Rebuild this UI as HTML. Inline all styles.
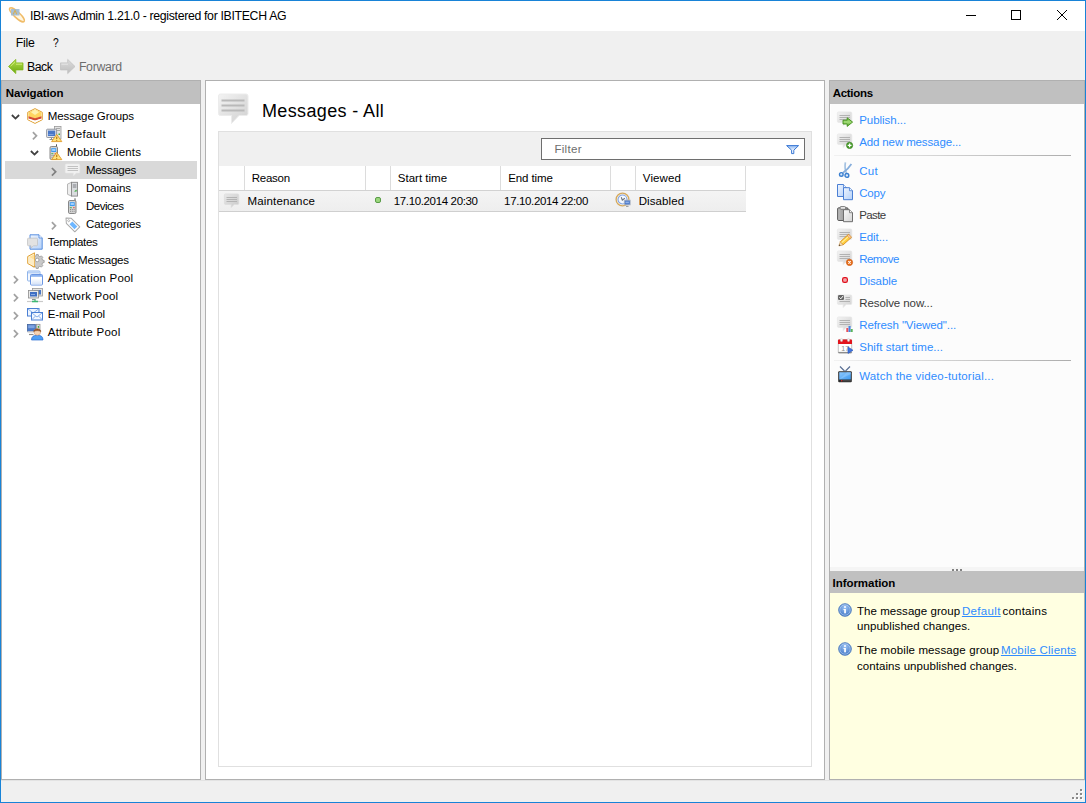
<!DOCTYPE html>
<html><head><meta charset="utf-8"><title>IBI-aws Admin</title>
<style>
*{box-sizing:border-box;margin:0;padding:0}
html,body{width:1086px;height:803px;overflow:hidden;background:#f0f0f0}
body{font-family:"Liberation Sans",sans-serif;font-size:12px;color:#000;position:relative}
.a{position:absolute}
.t{position:absolute;white-space:pre}
svg{position:absolute;overflow:visible}
.panel{position:absolute;background:#fff;border:1px solid #b0b0b0}
.phead{position:absolute;left:0;top:0;right:0;height:23px;background:#c0c0c0}
.vs{position:absolute;width:1px;background:#dcdcdc;top:166px;height:24px}
</style></head><body>
<svg width="0" height="0" style="position:absolute">
 <defs>
  <linearGradient id="gBub" x1="0" y1="0" x2="1" y2="1"><stop offset="0" stop-color="#f3f3f3"/><stop offset="1" stop-color="#d0d0d0"/></linearGradient>
  <linearGradient id="gGreen" x1="0" y1="0" x2="0" y2="1"><stop offset="0" stop-color="#b8e04a"/><stop offset="1" stop-color="#6aa812"/></linearGradient>
  <linearGradient id="gGray" x1="0" y1="0" x2="0" y2="1"><stop offset="0" stop-color="#dcdcdc"/><stop offset="1" stop-color="#bdbdbd"/></linearGradient>
  <linearGradient id="gBlue" x1="0" y1="0" x2="0" y2="1"><stop offset="0" stop-color="#8fc4ff"/><stop offset="1" stop-color="#4a94e8"/></linearGradient>
  <radialGradient id="gInfo" cx=".5" cy=".3" r=".7"><stop offset="0" stop-color="#9cc4f4"/><stop offset="1" stop-color="#3f74c4"/></radialGradient>
  <linearGradient id="gGreenH" x1="0" y1="0" x2="0" y2="1"><stop offset="0" stop-color="#6cbf3a"/><stop offset=".5" stop-color="#a4dc7a"/><stop offset="1" stop-color="#4f9f22"/></linearGradient>
  <linearGradient id="gWin" x1="0" y1="0" x2="0" y2="1"><stop offset="0" stop-color="#fff"/><stop offset="1" stop-color="#d4e2f8"/></linearGradient>
  <linearGradient id="gPgB" x1="0" y1="0" x2="1" y2="1"><stop offset="0" stop-color="#eef5ff"/><stop offset="1" stop-color="#b4d0f8"/></linearGradient>
  <linearGradient id="gPgG" x1="0" y1="0" x2="1" y2="1"><stop offset="0" stop-color="#fafafa"/><stop offset="1" stop-color="#d4d4d4"/></linearGradient>
  <linearGradient id="gClip" x1="0" y1="0" x2="1" y2="0"><stop offset="0" stop-color="#bcbcbc"/><stop offset="1" stop-color="#8c8c8c"/></linearGradient>
  <linearGradient id="gTv" x1="0" y1="0" x2="1" y2="1"><stop offset="0" stop-color="#8cc8ff"/><stop offset="1" stop-color="#3f9af0"/></linearGradient>
  <linearGradient id="gBubD" x1="0" y1="0" x2="1" y2="1"><stop offset="0" stop-color="#e8e8e8"/><stop offset="1" stop-color="#c8c8c8"/></linearGradient>
  <g id="bub16">
   <path d="M1.5 1.5h12a1 1 0 0 1 1 1v7a1 1 0 0 1-1 1h-4.5l-3 3v-3h-4.5a1 1 0 0 1-1-1v-7a1 1 0 0 1 1-1z" fill="url(#gBub)" stroke="#e2e2e2" stroke-width=".6"/>
   <path d="M3 4h9.5M3 6h9.5M3 8h9.5" stroke="#b4b4b4" stroke-width="1"/>
  </g>
  <g id="warn">
   <path d="M5.5 0.8L10.6 9.5H0.4z" fill="#ffd54a" stroke="#e09a1a" stroke-width=".9" stroke-linejoin="round"/>
   <path d="M5.5 3.6v3" stroke="#fff" stroke-width="1.3"/><circle cx="5.5" cy="8" r=".7" fill="#fff"/>
  </g>
  <g id="chevR"><path d="M.9 1.200L4.500 4.800L.9 8.400" fill="none" stroke="#a2a2a2" stroke-width="1.700"/></g>
  <g id="chevD"><path d="M.9 1L4.500 4.600L8.100 1" fill="none" stroke="#404040" stroke-width="1.800"/></g>
 </defs>
</svg>

<!-- window frame -->
<div class="a" style="left:0;top:0;width:1086px;height:803px;border:1px solid #1883d7;background:#f0f0f0"></div>
<div class="a" style="left:1px;top:1px;width:1084px;height:30px;background:#fff"></div>
<!-- title icon -->
<svg style="left:8px;top:6px" width="18" height="18" viewBox="0 0 18 18">
 <ellipse cx="9" cy="8.800" rx="9.800" ry="2.900" transform="rotate(43 9 8.800)" fill="#fff6e2" stroke="#f0bc68" stroke-width="1.500"/>
 <rect x="3" y="3" width="8.500" height="6.500" fill="#9fbbd6" fill-opacity=".9"/>
 <path d="M5.300 8.300L7 4.300L8.800 8.300" fill="none" stroke="#d4ae58" stroke-width="1.100"/>
</svg>
<!-- window controls -->
<div class="a" style="left:966px;top:15px;width:10px;height:1px;background:#000"></div>
<div class="a" style="left:1011px;top:10px;width:10px;height:10px;border:1px solid #000"></div>
<svg style="left:1057px;top:10px" width="10" height="10" viewBox="0 0 10 10"><path d="M0 0L10 10M10 0L0 10" stroke="#000" stroke-width="1"/></svg>

<!-- toolbar arrows -->
<svg style="left:8px;top:59px" width="16" height="15" viewBox="0 0 16 15">
 <path d="M.5 7.500L7.800 .4V3.900H15V10.900H7.800V14.600z" fill="url(#gGreen)" stroke="#82b81c" stroke-width=".8" stroke-linejoin="round"/>
 <path d="M2.600 7.200L6.900 3M8 5.200H14" fill="none" stroke="#e0f590" stroke-width="1" opacity=".75"/>
</svg>
<svg style="left:60px;top:59px" width="16" height="15" viewBox="0 0 16 15">
 <path d="M15 7.500L7.700 .4V3.900H.5V10.900H7.700V14.600z" fill="url(#gGray)" stroke="#c2c2c2" stroke-width=".8" stroke-linejoin="round"/>
 <path d="M1.500 5.200H8" fill="none" stroke="#ececec" stroke-width="1" opacity=".8"/>
</svg>

<!-- NAV PANEL -->
<div class="panel" style="left:1px;top:80px;width:200px;height:700px"><div class="phead"></div></div>
<div class="a" style="left:5px;top:161px;width:192px;height:18px;background:#d9d9d9"></div>
<!-- tree chevrons -->
<svg style="left:11px;top:113.8px" width="10" height="7"><use href="#chevD"/></svg>
<svg style="left:31.6px;top:130.5px" width="7" height="10"><use href="#chevR"/></svg>
<svg style="left:30px;top:149.8px" width="10" height="7"><use href="#chevD"/></svg>
<svg style="left:50.8px;top:166.5px" width="7" height="10"><path d="M.9 1L4.700 4.800L.9 8.600" fill="none" stroke="#808080" stroke-width="1.700"/></svg>
<svg style="left:50.8px;top:220.5px" width="7" height="10"><use href="#chevR"/></svg>
<svg style="left:12.8px;top:274.5px" width="7" height="10"><use href="#chevR"/></svg>
<svg style="left:12.8px;top:292.5px" width="7" height="10"><use href="#chevR"/></svg>
<svg style="left:12.8px;top:310.5px" width="7" height="10"><use href="#chevR"/></svg>
<svg style="left:12.8px;top:328.5px" width="7" height="10"><use href="#chevR"/></svg>
<!-- tree icons -->

<!-- CENTER PANEL -->
<div class="panel" style="left:205px;top:80px;width:620px;height:700px"></div>
<!-- big bubble -->
<svg style="left:218px;top:93px" width="32" height="32" viewBox="0 0 32 32">
 <path d="M2.5 1h25.5a2 2 0 0 1 2 2v17.5a2 2 0 0 1-2 2h-7l-7.5 8v-8h-11a2 2 0 0 1-2-2v-17.500a2 2 0 0 1 2-2z" fill="url(#gBub)" stroke="#ececec" stroke-width="1"/>
 <path d="M3.5 7.500h23M3.500 12.500h23M3.500 17.500h23" stroke="#b9b9b9" stroke-width="2"/>
</svg>
<!-- grid -->
<div class="a" style="left:218px;top:131px;width:594px;height:636px;border:1px solid #e0e0e0;background:#fff"></div>
<div class="a" style="left:219px;top:132px;width:592px;height:34px;background:#f0f0f0"></div>
<div class="a" style="left:541px;top:138px;width:264px;height:22px;background:#fff;border:1px solid #6e6e6e"></div>
<svg style="left:786px;top:145px" width="14" height="10" viewBox="0 0 14 10"><defs><linearGradient id="gFun" x1="0" y1="0" x2="0" y2="1"><stop offset="0" stop-color="#8fb8f0"/><stop offset=".6" stop-color="#eef5ff"/></linearGradient></defs><path d="M.6 .6H12.600L7.800 5.200V8.600H5.600V5.200z" fill="url(#gFun)" stroke="#3a78d4" stroke-width="1" stroke-linejoin="round"/></svg>
<!-- header separators -->
<div class="vs" style="left:244px"></div><div class="vs" style="left:365px"></div><div class="vs" style="left:390px"></div>
<div class="vs" style="left:500px"></div><div class="vs" style="left:610px"></div><div class="vs" style="left:635px"></div><div class="vs" style="left:745px"></div>
<!-- row -->
<div class="a" style="left:219px;top:190px;width:527px;height:22px;background:linear-gradient(#f4f4f4,#eeeeee);border-top:1px solid #d2d2d2;border-bottom:1px solid #cfcfcf"></div>
<svg style="left:224px;top:192.800px" width="16" height="16" viewBox="0 0 16 16"><path d="M1.600 .9h12a1.200 1.200 0 0 1 1.200 1.200v8.200a1.200 1.200 0 0 1-1.200 1.200h-3.600l-2.800 3v-3h-5.600a1.200 1.200 0 0 1-1.200-1.200v-8.200a1.200 1.200 0 0 1 1.200-1.200z" fill="url(#gBubD)" stroke="#dcdcdc" stroke-width=".7"/><path d="M2.500 4.500h10.500M2.500 6.500h10.500M2.500 8.500h10.500" stroke="#b4b4b4" stroke-width="1"/></svg>
<div class="a" style="left:375px;top:197px;width:6px;height:6px;border-radius:2px;background:#9ad67c;border:1px solid #5a9c48"></div>
<!-- clock icon -->
<svg style="left:615.100px;top:192.200px" width="16" height="16" viewBox="0 0 16 16">
 <circle cx="7.500" cy="7.500" r="6.400" fill="#fcf4e2" stroke="#d4a85c" stroke-width="1.300"/>
 <circle cx="7.500" cy="7.500" r="4.500" fill="#f4f9ff" stroke="#7fa2e4" stroke-width="1.100"/>
 <path d="M6.300 5.300L7.300 8.200L9.800 6.300" fill="none" stroke="#6a7078" stroke-width="1.100"/>
 <rect x="9.200" y="8.100" width="6" height="4.800" fill="#4a78c8" stroke="#b8bcc4" stroke-width=".8"/>
 <rect x="10.500" y="9.600" width="3.400" height="1.600" fill="#8fb0e8"/>
 <path d="M11 14.300h2.500" stroke="#8c8c8c" stroke-width="1"/>
</svg>

<!-- RIGHT PANEL -->
<div class="panel" style="left:829px;top:80px;width:256px;height:700px;background:#fcfcfc"><div class="phead"></div></div>
<div class="a" style="left:834px;top:155px;width:237px;height:1px;background:linear-gradient(to right,#f2f2f2,#cfcfcf 50%,#adadad)"></div>
<div class="a" style="left:834px;top:360px;width:237px;height:1px;background:linear-gradient(to right,#f2f2f2,#cfcfcf 50%,#adadad)"></div>
<div class="a" style="left:830px;top:104px;width:1px;height:463px;background:#fff"></div><div class="a" style="left:1083px;top:104px;width:1px;height:463px;background:#fff"></div>
<!-- splitter + info -->
<div class="a" style="left:830px;top:567px;width:254px;height:4px;background:#f5f5f5"></div>
<div class="a" style="left:952px;top:569px;width:2px;height:2px;background:#828282;box-shadow:4px 0 #828282,8px 0 #828282"></div>
<div class="a" style="left:830px;top:571px;width:254px;height:22px;background:#c0c0c0"></div>
<div class="a" style="left:830px;top:593px;width:254px;height:186px;background:#ffffe1"></div>
<svg style="left:838px;top:603px" width="14" height="14" viewBox="0 0 14 14"><circle cx="7" cy="7" r="6.300" fill="url(#gInfo)" stroke="#4a78bc" stroke-width=".9"/><circle cx="7" cy="7" r="5.200" fill="none" stroke="#c4dcf8" stroke-width=".7" opacity=".8"/><rect x="6.200" y="6" width="1.700" height="4.300" fill="#fff"/><rect x="5.500" y="6" width="1.500" height="1" fill="#fff"/><circle cx="7" cy="4" r="1" fill="#fff"/></svg>
<svg style="left:838px;top:642px" width="14" height="14" viewBox="0 0 14 14"><circle cx="7" cy="7" r="6.300" fill="url(#gInfo)" stroke="#4a78bc" stroke-width=".9"/><circle cx="7" cy="7" r="5.200" fill="none" stroke="#c4dcf8" stroke-width=".7" opacity=".8"/><rect x="6.200" y="6" width="1.700" height="4.300" fill="#fff"/><rect x="5.500" y="6" width="1.500" height="1" fill="#fff"/><circle cx="7" cy="4" r="1" fill="#fff"/></svg>

<div class="a" style="left:1px;top:780px;width:1084px;height:1px;background:#e3e3e3"></div>
<!-- status grip -->
<div class="a" style="left:1080px;top:789px;width:2px;height:2px;background:#8a8a8a;box-shadow:1px 1px #fff"></div>
<div class="a" style="left:1076px;top:793px;width:2px;height:2px;background:#8a8a8a;box-shadow:1px 1px #fff"></div>
<div class="a" style="left:1080px;top:793px;width:2px;height:2px;background:#8a8a8a;box-shadow:1px 1px #fff"></div>
<div class="a" style="left:1072px;top:797px;width:2px;height:2px;background:#8a8a8a;box-shadow:1px 1px #fff"></div>
<div class="a" style="left:1076px;top:797px;width:2px;height:2px;background:#8a8a8a;box-shadow:1px 1px #fff"></div>
<div class="a" style="left:1080px;top:797px;width:2px;height:2px;background:#8a8a8a;box-shadow:1px 1px #fff"></div>

<svg style="left:27px;top:108px" width="16" height="16" viewBox="0 0 16 16"><path d="M8 .6L15.300 4.300V11.700L8 15.400L.7 11.700V4.300z" fill="#fffaf0" stroke="#e0a236" stroke-width="1" stroke-linejoin="round"/><path d="M1.500 4.600L8 1.400L14.500 4.600V8.500L8 10.500L1.500 8.500z" fill="#ffd560"/><path d="M8 1.400L12 4.300L8 7L4 4.300z" fill="#fff2b0"/><path d="M1.500 8.300L8 10.300L14.500 8.300V10.500L8 12.500L1.500 10.500z" fill="#d44a32"/><path d="M1.500 10.700L8 12.700L14.500 10.700V11.500L8 14.600L1.500 11.500z" fill="#fff"/></svg>
<svg style="left:46px;top:126px" width="16" height="16" viewBox="0 0 16 16"><rect x="8.500" y=".5" width="6.500" height="12.500" fill="#e4e4e4" stroke="#9a9a9a" stroke-width=".8"/><path d="M10 2.500h4M10 4.500h4" stroke="#9a9a9a" stroke-width=".8"/><rect x="12.500" y="7.500" width="1.500" height="1.500" fill="#3fae3f"/><rect x=".6" y="3.200" width="10" height="8.300" rx=".8" fill="#dfe3ea" stroke="#8a8f98" stroke-width=".9"/><rect x="2" y="4.600" width="7.200" height="5.400" fill="#4a78c8"/><path d="M2.500 8.500h5" stroke="#8fb0e8" stroke-width=".7"/><path d="M3.500 13.500h5M5.500 11.500v2" stroke="#8a8f98" stroke-width="1"/><g transform="translate(5.2,7.6)"><path d="M5.500 .8L10.600 8H.4z" fill="#ffe27a" stroke="#e09a28" stroke-width=".9" stroke-linejoin="round"/><path d="M5.500 3.200v2.300" stroke="#b87a1c" stroke-width="1.200"/><circle cx="5.500" cy="6.700" r=".65" fill="#b87a1c"/></g></svg>
<svg style="left:46px;top:144px" width="16" height="16" viewBox="0 0 16 16"><g transform="translate(1.500,0)"><path d="M9 .3v4" stroke="#555" stroke-width="1"/><rect x="2.500" y="2.500" width="7.500" height="13" rx="1.300" fill="#d4d4d4" stroke="#7d7d7d" stroke-width=".9"/><rect x="3.800" y="4.200" width="4.900" height="3.800" fill="#3c9cf4"/><rect x="4.600" y="5.200" width="3.300" height="1.600" fill="#b8dcff"/><rect x="3.800" y="9.200" width="2" height="1" fill="#4caf50"/><rect x="7.200" y="9.200" width="1.400" height="1" fill="#e53935"/><path d="M4 11.500h1M5.800 11.500h1M7.600 11.500h1M4 13.300h1M5.800 13.300h1M7.600 13.300h1" stroke="#8a8a8a" stroke-width="1"/></g><g transform="translate(5.2,7.6)"><path d="M5.500 .8L10.600 8H.4z" fill="#ffe27a" stroke="#e09a28" stroke-width=".9" stroke-linejoin="round"/><path d="M5.500 3.200v2.300" stroke="#b87a1c" stroke-width="1.200"/><circle cx="5.500" cy="6.700" r=".65" fill="#b87a1c"/></g></svg>
<svg style="left:64.5px;top:162.5px" width="16" height="15" viewBox="0 0 16 15"><path d="M1.400 .9h12.200a1.200 1.200 0 0 1 1.200 1.200v6.800a1.200 1.200 0 0 1-1.200 1.200h-2.400l-2.800 2.800v-2.800h-7a1.200 1.200 0 0 1-1.200-1.200v-6.800a1.200 1.200 0 0 1 1.200-1.200z" fill="#f1f1f1" stroke="#e6e6e6" stroke-width=".6"/><path d="M2.500 3.500h10.500M2.500 5.500h10.500M2.500 7.500h10.500" stroke="#c2c2c2" stroke-width="1"/></svg>
<svg style="left:66px;top:180.5px" width="16" height="16" viewBox="0 0 16 16"><g transform="translate(0,.5)"><path d="M1.500 2.600L5.500 .8V14.600L1.500 12.800z" fill="#eeeeee" stroke="#a6a6a6" stroke-width=".8" stroke-linejoin="round"/><rect x="5.500" y=".8" width="6" height="13.800" fill="#dadcdf" stroke="#888" stroke-width=".9"/><path d="M6.800 3.500h3.600M6.800 5.500h3.600" stroke="#7c7f84" stroke-width="1"/><path d="M8.600 9.800l1.800-1.400v1.400z" fill="#3fae3f" stroke="#3fae3f" stroke-width=".5"/></g></svg>
<svg style="left:66px;top:198px" width="16" height="16" viewBox="0 0 16 16"><path d="M9 .3v4" stroke="#555" stroke-width="1"/><rect x="2.500" y="2.500" width="7.500" height="13" rx="1.300" fill="#d4d4d4" stroke="#7d7d7d" stroke-width=".9"/><rect x="3.800" y="4.200" width="4.900" height="3.800" fill="#3c9cf4"/><rect x="4.600" y="5.200" width="3.300" height="1.600" fill="#b8dcff"/><rect x="3.800" y="9.200" width="2" height="1" fill="#4caf50"/><rect x="7.200" y="9.200" width="1.400" height="1" fill="#e53935"/><path d="M4 11.500h1M5.800 11.500h1M7.600 11.500h1M4 13.300h1M5.800 13.300h1M7.600 13.300h1" stroke="#8a8a8a" stroke-width="1"/></svg>
<svg style="left:64px;top:216px" width="16" height="16" viewBox="0 0 16 16"><g transform="rotate(45 8 8)"><path d="M-.5 8L3.500 4.500H15.500V11.500H3.500z" fill="#fff" stroke="#a9a9a9" stroke-width="1" stroke-linejoin="round"/><circle cx="3.300" cy="8" r="1" fill="#fff" stroke="#a9a9a9" stroke-width=".8"/><rect x="6.500" y="6" width="7" height="4" fill="#6db6ff"/></g></svg>
<svg style="left:27px;top:234px" width="16" height="16" viewBox="0 0 16 16"><path d="M3 .8H12L15.200 4V15.200H3z" fill="url(#gPgB)" stroke="#4a84dc" stroke-width=".9" stroke-linejoin="round"/><path d="M12 .8V4H15.200" fill="#f4f8ff" stroke="#4a84dc" stroke-width=".8"/><path d="M1.500 4.200h8a1 1 0 0 1 1 1v5.600a1 1 0 0 1-1 1h-3l-2.500 2.200v-2.200h-2.500a1 1 0 0 1-1-1v-5.600a1 1 0 0 1 1-1z" fill="#e2e2e2" stroke="#bebebe" stroke-width=".7"/></svg>
<svg style="left:27px;top:252px" width="16" height="16" viewBox="0 0 16 16"><g transform="translate(10.200,8)"><path d="M-1-5.500h2l.4 1.600 1.300.6 1.500-.8 1.400 1.400-.8 1.500.6 1.300 1.600.4v2l-1.600.4-.6 1.300.8 1.500-1.400 1.400-1.500-.8-1.300.6-.4 1.600h-2l-.4-1.600-1.300-.6-1.500.8-1.400-1.400.8-1.500-.6-1.300-1.600-.4v-2l1.600-.4.600-1.300-.8-1.500 1.400-1.400 1.500.8 1.300-.6z" fill="#c9c9c9" stroke="#8f8f8f" stroke-width=".7"/><circle r="1.800" fill="#fff" stroke="#8f8f8f" stroke-width=".7"/></g><path d="M7.500 .8L.7 4.500V11.500L7.500 15.200z" fill="#fff6e0" stroke="#e0a236" stroke-width="1" stroke-linejoin="round"/><path d="M7.300 2.200L2 5L7.300 8z" fill="#ffe09a"/><path d="M7.300 8L2 5V11L7.300 13.800z" fill="#fdecc4"/></svg>
<svg style="left:27px;top:270px" width="16" height="16" viewBox="0 0 16 16"><rect x=".5" y="1" width="12.500" height="10" rx="1" fill="#f4f8fe" stroke="#8fb4ea" stroke-width="1"/><rect x="1" y="1.500" width="11.500" height="2" fill="#b9d2f6"/><rect x="3.500" y="4.500" width="12" height="10.500" rx="1" fill="#fff" stroke="#5a8ae0" stroke-width=".9"/><rect x="4" y="5" width="11" height="1.800" fill="#8db4f0"/><rect x="4.500" y="8.500" width="10" height="6" fill="url(#gWin)"/></svg>
<svg style="left:27px;top:288px" width="16" height="16" viewBox="0 0 16 16"><rect x="5.500" y=".5" width="10" height="7.500" fill="#e6e6e6" stroke="#9a9a9a" stroke-width=".8"/><rect x="7" y="2" width="7" height="4.500" fill="#4a78c8"/><rect x="1.500" y="2.500" width="10" height="7.500" fill="#e9e9e9" stroke="#8d8d8d" stroke-width=".8"/><rect x="3" y="4" width="7" height="4.500" fill="#3f6fc4"/><path d="M4 6.500h4" stroke="#9fbcea" stroke-width=".8"/><path d="M5 11.500h3.500" stroke="#8d8d8d" stroke-width="1"/><path d="M0 13.500h16" stroke="#c9c9c9" stroke-width="1.200"/><path d="M5 13.500h6M8 11.500v2" stroke="#3fb872" stroke-width="1.300"/></svg>
<svg style="left:27px;top:306px" width="16" height="16" viewBox="0 0 16 16"><rect x=".5" y="2.500" width="11.500" height="7.500" fill="#eef5ff" stroke="#4a7fd4" stroke-width="1"/><path d="M1 3L6.200 7L11.500 3" fill="none" stroke="#7fa8e6" stroke-width=".9"/><rect x="4.500" y="6.500" width="11" height="7.500" fill="#f4f8ff" stroke="#4a7fd4" stroke-width="1"/><path d="M5 7L10 11L15 7M5 13.500L8.500 10M15 13.500L11.500 10" fill="none" stroke="#7fa8e6" stroke-width=".9"/></svg>
<svg style="left:27px;top:324px" width="16" height="16" viewBox="0 0 16 16"><rect x="9.500" y=".3" width="3.500" height="8" fill="#dcdcdc" stroke="#8c8c8c" stroke-width=".7"/><rect x="10.800" y="2" width="1.200" height="1.800" fill="#3fae3f"/><rect x=".3" y=".3" width="8.200" height="7" fill="#4a78c8" stroke="#38598f" stroke-width=".6"/><rect x="1.200" y="1.200" width="6.400" height="3" fill="#7fa4e0"/><rect x=".5" y="7.300" width="8" height="1.500" fill="#d8d8d8"/><path d="M2 10.500h4.500" stroke="#8d8d8d" stroke-width="1.200"/><path d="M4.500 16C4.500 12.500 6.500 11.300 10.300 11.300C14 11.300 16 12.500 16 16z" fill="#4f9ff4" stroke="#2c6fd0" stroke-width=".7"/><circle cx="10.300" cy="8" r="3.300" fill="#f6d4b4" stroke="#c8926a" stroke-width=".5"/><path d="M6.800 7.500C6.800 4 13.800 4 13.800 7.500C12.500 6.300 8 6.300 6.800 7.500z" fill="#8a4a1c" stroke="#8a4a1c" stroke-width=".6"/></svg>
<svg style="left:837px;top:111px" width="16" height="16" viewBox="0 0 16 16"><path d="M1.6 .9h12.000a1.200 1.200 0 0 1 1.200 1.200v8.200a1.200 1.200 0 0 1-1.200 1.200h-4.600l-2.800 3v-3h-4.600a1.200 1.200 0 0 1-1.200-1.200v-8.200a1.200 1.200 0 0 1 1.200-1.200z" fill="url(#gBub)" stroke="#e6e6e6" stroke-width=".7"/><path d="M2.500 4.500h10.500M2.500 6.500h10.500M2.500 8.500h10.500" stroke="#b2b2b2" stroke-width="1"/><path d="M6 9.200h4.200v-2.400l5.400 4.300-5.400 4.300v-2.400h-4.200z" fill="url(#gGreenH)" stroke="#3f8f1a" stroke-width=".9" stroke-linejoin="round"/></svg>
<svg style="left:837px;top:133px" width="16" height="16" viewBox="0 0 16 16"><path d="M1.6 .9h12.000a1.200 1.200 0 0 1 1.200 1.200v8.200a1.200 1.200 0 0 1-1.200 1.200h-4.600l-2.800 3v-3h-4.600a1.200 1.200 0 0 1-1.200-1.200v-8.200a1.200 1.200 0 0 1 1.200-1.200z" fill="url(#gBub)" stroke="#e6e6e6" stroke-width=".7"/><path d="M2.500 4.500h10.500M2.500 6.500h10.500M2.500 8.500h10.500" stroke="#b2b2b2" stroke-width="1"/><circle cx="12.600" cy="12.400" r="3.100" fill="#4aa02c" stroke="#3b7f22" stroke-width=".7"/><path d="M12.600 10.500v3.800M10.700 12.400h3.800" stroke="#fff" stroke-width="1.300"/></svg>
<svg style="left:837px;top:162px" width="16" height="16" viewBox="0 0 16 16"><path d="M8.400 .3C7.700 4 7.900 8 9.600 11.500" fill="none" stroke="#a4c2e2" stroke-width="1.700"/><path d="M14.400 2C12.500 5 9.500 8.300 5.800 11" fill="none" stroke="#86aedc" stroke-width="1.700"/><circle cx="4.300" cy="12.400" r="1.800" fill="#dcebfb" stroke="#3a7fd0" stroke-width="1.400"/><circle cx="9.900" cy="13.400" r="1.900" fill="#dcebfb" stroke="#3a7fd0" stroke-width="1.400"/></svg>
<svg style="left:837px;top:184px" width="16" height="16" viewBox="0 0 16 16"><g><path d="M.5 .5H6.500L9.500 3.500V12.500H.5z" fill="url(#gPgB)" stroke="#4a7fd4" stroke-width="1" stroke-linejoin="round"/><path d="M6.500 .5V3.500H9.500" fill="#f2f7ff" stroke="#4a7fd4" stroke-width=".8" stroke-linejoin="round"/></g><g transform="translate(6,3.200)"><path d="M.5 .5H6.500L9.500 3.500V12.500H.5z" fill="url(#gPgB)" stroke="#4a7fd4" stroke-width="1" stroke-linejoin="round"/><path d="M6.500 .5V3.500H9.500" fill="#f2f7ff" stroke="#4a7fd4" stroke-width=".8" stroke-linejoin="round"/></g></svg>
<svg style="left:837px;top:206px" width="16" height="16" viewBox="0 0 16 16"><rect x=".6" y="1.800" width="10.500" height="12.700" rx="1.200" fill="url(#gClip)" stroke="#5a5a5a" stroke-width="1"/><rect x="3.200" y=".5" width="5.300" height="2.800" rx=".8" fill="#e4e4e4" stroke="#6a6a6a" stroke-width=".8"/><g transform="translate(6,3.200)"><path d="M.5 .5H6.500L9.500 3.500V12.500H.5z" fill="url(#gPgG)" stroke="#6e6e6e" stroke-width="1" stroke-linejoin="round"/><path d="M6.500 .5V3.500H9.500" fill="#f6f6f6" stroke="#6e6e6e" stroke-width=".8" stroke-linejoin="round"/></g></svg>
<svg style="left:837px;top:228px" width="16" height="16" viewBox="0 0 16 16"><path d="M1.6 .9h12.000a1.200 1.200 0 0 1 1.200 1.200v8.200a1.200 1.200 0 0 1-1.200 1.200h-4.600l-2.800 3v-3h-4.600a1.200 1.200 0 0 1-1.200-1.200v-8.200a1.200 1.200 0 0 1 1.200-1.200z" fill="url(#gBub)" stroke="#e6e6e6" stroke-width=".7"/><path d="M2.500 4.500h10.500M2.500 6.500h10.500M2.500 8.500h10.500" stroke="#b2b2b2" stroke-width="1"/><g transform="rotate(-42 9.500 11)"><rect x="3" y="8.900" width="11" height="4.200" fill="#ffcf40" stroke="#d88a1a" stroke-width=".8"/><path d="M3 8.900L-.8 11L3 13.100z" fill="#f6dfb8" stroke="#c8924a" stroke-width=".6"/><path d="M.6 10.200L-.8 11L.6 11.800z" fill="#4a3a2a"/><rect x="12.200" y="8.900" width="2.200" height="4.200" rx=".8" fill="#f8c8a8" stroke="#d88a1a" stroke-width=".6"/><path d="M3.500 10.500h8.500" stroke="#fff0a0" stroke-width="1.100"/></g></svg>
<svg style="left:837px;top:250px" width="16" height="16" viewBox="0 0 16 16"><path d="M1.6 .9h12.000a1.200 1.200 0 0 1 1.200 1.200v8.200a1.200 1.200 0 0 1-1.200 1.200h-4.600l-2.800 3v-3h-4.600a1.200 1.200 0 0 1-1.200-1.200v-8.200a1.200 1.200 0 0 1 1.200-1.200z" fill="url(#gBub)" stroke="#e6e6e6" stroke-width=".7"/><path d="M2.500 4.500h10.500M2.500 6.500h10.500M2.500 8.500h10.500" stroke="#b2b2b2" stroke-width="1"/><circle cx="12.500" cy="12.400" r="3.100" fill="#e8701c" stroke="#cc5a14" stroke-width=".7"/><path d="M11.300 11.200l2.400 2.400M13.700 11.200l-2.400 2.400" stroke="#fff" stroke-width="1.100"/></svg>
<svg style="left:837px;top:272px" width="16" height="16" viewBox="0 0 16 16"><rect x="5.600" y="5.600" width="4.800" height="4.800" rx="1.700" fill="#f2a4aa" stroke="#e0101c" stroke-width="1.200"/></svg>
<svg style="left:837px;top:294px" width="16" height="16" viewBox="0 0 16 16"><path d="M1.600 .9h12.000a1.200 1.200 0 0 1 1.200 1.200v7.200a1.200 1.200 0 0 1-1.200 1.200h-4.600l-2.800 3v-3h-4.600a1.200 1.200 0 0 1-1.200-1.200v-7.200a1.200 1.200 0 0 1 1.200-1.200z" fill="url(#gBub)" stroke="#e6e6e6" stroke-width=".7"/><path d="M8.500 3.500h4.500M8.500 5.500h4.500M2.500 7.500h10.500" stroke="#b2b2b2" stroke-width="1"/><rect x="1" y="1" width="6" height="5" rx="1.300" fill="#666"/><path d="M2.400 3.400l1.400 1.400 2.200-2.700" fill="none" stroke="#fff" stroke-width="1"/></svg>
<svg style="left:837px;top:316px" width="16" height="16" viewBox="0 0 16 16"><path d="M1.6 .9h12.000a1.200 1.200 0 0 1 1.200 1.200v8.200a1.200 1.200 0 0 1-1.200 1.200h-4.600l-2.800 3v-3h-4.600a1.200 1.200 0 0 1-1.200-1.200v-8.200a1.200 1.200 0 0 1 1.200-1.200z" fill="url(#gBub)" stroke="#e6e6e6" stroke-width=".7"/><path d="M2.500 4.500h10.500M2.500 6.500h10.500M2.500 8.500h10.500" stroke="#b2b2b2" stroke-width="1"/><rect x="9.300" y="12" width="2.100" height="4" fill="#e8505a"/><rect x="11.500" y="10" width="2.100" height="6" fill="#4a86e4"/><rect x="13.700" y="13" width="2" height="3" fill="#5ab45a"/></svg>
<svg style="left:837px;top:338px" width="16" height="16" viewBox="0 0 16 16"><rect x="1.300" y="1.500" width="13.400" height="13.700" rx="1" fill="#fff" stroke="#b4b4b4" stroke-width=".8"/><path d="M1.300 14.500h13.400" stroke="#8c8c8c" stroke-width="1.200"/><path d="M1 2.500a1 1 0 0 1 1-1h12a1 1 0 0 1 1 1V6H1z" fill="#e2141c"/><rect x="3.500" y=".5" width="2" height="3" rx=".8" fill="#f4f4f4" stroke="#c9c9c9" stroke-width=".5"/><rect x="10.500" y=".5" width="2" height="3" rx=".8" fill="#f4f4f4" stroke="#c9c9c9" stroke-width=".5"/><text x="4.300" y="12.800" font-family="Liberation Sans,sans-serif" font-size="7" fill="#8a8a8a">17</text><path d="M11 9l5 3.200-5 3.200z" fill="#3f74e0" stroke="#2a55b8" stroke-width=".6" stroke-linejoin="round"/></svg>
<svg style="left:837px;top:365px" width="16" height="18" viewBox="0 0 16 18"><path d="M3 1.500L7.500 6M13 1.500L8.500 6" stroke="#5a6f94" stroke-width="1.200"/><rect x="1.200" y="6.200" width="13.600" height="11" rx="1" fill="#2b2b2b"/><rect x="2.200" y="7.200" width="11.600" height="7.300" fill="url(#gTv)"/><path d="M2.200 14.500L10 7.200H13.800V9z" fill="#9fd0ff" opacity=".45"/><rect x="4" y="15.300" width="1.400" height="1" fill="#ff3030"/><path d="M6.500 15.800h7" stroke="#777" stroke-width="1" stroke-dasharray="1 1"/></svg>
<span class="t" style="left:29.9px;top:7.7px;font-size:12.3px;line-height:16px;letter-spacing:-0.326px;color:#000;font-weight:400;">IBI-aws Admin 1.21.0 - registered for IBITECH AG</span>
<span class="t" style="left:15.8px;top:34.7px;font-size:12.3px;line-height:16px;letter-spacing:-0.276px;color:#000;font-weight:400;">File</span>
<span class="t" style="left:52.5px;top:34.7px;font-size:12.3px;line-height:16px;letter-spacing:0.000px;color:#000;font-weight:400;display:inline-block;transform-origin:0 0;transform:scaleX(0.833);">?</span>
<span class="t" style="left:26.9px;top:58.7px;font-size:12.3px;line-height:16px;letter-spacing:-0.448px;color:#000;font-weight:400;">Back</span>
<span class="t" style="left:78.9px;top:58.7px;font-size:12.3px;line-height:16px;letter-spacing:-0.302px;color:#6d6d6d;font-weight:400;">Forward</span>
<span class="t" style="left:5.7px;top:85.5px;font-size:11.5px;line-height:15px;letter-spacing:-0.100px;color:#000;font-weight:700;">Navigation</span>
<span class="t" style="left:832.7px;top:85.5px;font-size:11.5px;line-height:15px;letter-spacing:-0.295px;color:#000;font-weight:700;">Actions</span>
<span class="t" style="left:832.6px;top:575.5px;font-size:11.5px;line-height:15px;letter-spacing:-0.055px;color:#000;font-weight:700;">Information</span>
<span class="t" style="left:47.7px;top:108.5px;font-size:11.5px;line-height:15px;letter-spacing:-0.091px;color:#000;font-weight:400;">Message Groups</span>
<span class="t" style="left:67.0px;top:126.5px;font-size:11.5px;line-height:15px;letter-spacing:0.360px;color:#000;font-weight:400;">Default</span>
<span class="t" style="left:67.0px;top:144.5px;font-size:11.5px;line-height:15px;letter-spacing:0.128px;color:#000;font-weight:400;">Mobile Clients</span>
<span class="t" style="left:86.0px;top:162.5px;font-size:11.5px;line-height:15px;letter-spacing:-0.303px;color:#000;font-weight:400;">Messages</span>
<span class="t" style="left:86.0px;top:180.5px;font-size:11.5px;line-height:15px;letter-spacing:-0.065px;color:#000;font-weight:400;">Domains</span>
<span class="t" style="left:86.0px;top:198.5px;font-size:11.5px;line-height:15px;letter-spacing:-0.484px;color:#000;font-weight:400;">Devices</span>
<span class="t" style="left:86.0px;top:216.5px;font-size:11.5px;line-height:15px;letter-spacing:-0.058px;color:#000;font-weight:400;">Categories</span>
<span class="t" style="left:47.7px;top:234.5px;font-size:11.5px;line-height:15px;letter-spacing:-0.290px;color:#000;font-weight:400;">Templates</span>
<span class="t" style="left:47.7px;top:252.5px;font-size:11.5px;line-height:15px;letter-spacing:-0.220px;color:#000;font-weight:400;">Static Messages</span>
<span class="t" style="left:47.7px;top:270.5px;font-size:11.5px;line-height:15px;letter-spacing:0.201px;color:#000;font-weight:400;">Application Pool</span>
<span class="t" style="left:47.7px;top:288.5px;font-size:11.5px;line-height:15px;letter-spacing:0.183px;color:#000;font-weight:400;">Network Pool</span>
<span class="t" style="left:47.7px;top:306.5px;font-size:11.5px;line-height:15px;letter-spacing:-0.131px;color:#000;font-weight:400;">E-mail Pool</span>
<span class="t" style="left:47.7px;top:324.5px;font-size:11.5px;line-height:15px;letter-spacing:0.273px;color:#000;font-weight:400;">Attribute Pool</span>
<span class="t" style="left:859.2px;top:112.5px;font-size:11.5px;line-height:15px;letter-spacing:-0.035px;color:#2f8cff;font-weight:400;">Publish...</span>
<span class="t" style="left:859.2px;top:134.5px;font-size:11.5px;line-height:15px;letter-spacing:-0.124px;color:#2f8cff;font-weight:400;">Add new message...</span>
<span class="t" style="left:859.2px;top:163.5px;font-size:11.5px;line-height:15px;letter-spacing:0.247px;color:#2f8cff;font-weight:400;">Cut</span>
<span class="t" style="left:859.2px;top:185.5px;font-size:11.5px;line-height:15px;letter-spacing:-0.153px;color:#2f8cff;font-weight:400;">Copy</span>
<span class="t" style="left:859.2px;top:207.5px;font-size:11.5px;line-height:15px;letter-spacing:-0.605px;color:#3a3a3a;font-weight:400;">Paste</span>
<span class="t" style="left:859.2px;top:229.5px;font-size:11.5px;line-height:15px;letter-spacing:-0.068px;color:#2f8cff;font-weight:400;">Edit...</span>
<span class="t" style="left:859.2px;top:251.5px;font-size:11.5px;line-height:15px;letter-spacing:-0.546px;color:#2f8cff;font-weight:400;">Remove</span>
<span class="t" style="left:859.2px;top:273.5px;font-size:11.5px;line-height:15px;letter-spacing:-0.060px;color:#2f8cff;font-weight:400;">Disable</span>
<span class="t" style="left:859.2px;top:295.5px;font-size:11.5px;line-height:15px;letter-spacing:-0.084px;color:#3a3a3a;font-weight:400;">Resolve now...</span>
<span class="t" style="left:859.2px;top:317.5px;font-size:11.5px;line-height:15px;letter-spacing:-0.096px;color:#2f8cff;font-weight:400;">Refresh &quot;Viewed&quot;...</span>
<span class="t" style="left:859.2px;top:339.5px;font-size:11.5px;line-height:15px;letter-spacing:0.040px;color:#2f8cff;font-weight:400;">Shift start time...</span>
<span class="t" style="left:859.2px;top:368.5px;font-size:11.5px;line-height:15px;letter-spacing:0.182px;color:#2f8cff;font-weight:400;">Watch the video-tutorial...</span>
<span class="t" style="left:261.9px;top:99.8px;font-size:18px;line-height:23px;letter-spacing:0.373px;color:#000;font-weight:400;">Messages - All</span>
<span class="t" style="left:554.4px;top:141.5px;font-size:11.5px;line-height:15px;letter-spacing:0.327px;color:#6d6d6d;font-weight:400;">Filter</span>
<span class="t" style="left:251.7px;top:170.5px;font-size:11.5px;line-height:15px;letter-spacing:-0.228px;color:#000;font-weight:400;">Reason</span>
<span class="t" style="left:397.8px;top:170.5px;font-size:11.5px;line-height:15px;letter-spacing:0.009px;color:#000;font-weight:400;">Start time</span>
<span class="t" style="left:508.2px;top:170.5px;font-size:11.5px;line-height:15px;letter-spacing:-0.099px;color:#000;font-weight:400;">End time</span>
<span class="t" style="left:642.8px;top:170.5px;font-size:11.5px;line-height:15px;letter-spacing:0.137px;color:#000;font-weight:400;">Viewed</span>
<span class="t" style="left:247.4px;top:193.5px;font-size:11.5px;line-height:15px;letter-spacing:0.174px;color:#000;font-weight:400;">Maintenance</span>
<span class="t" style="left:393.7px;top:193.5px;font-size:11.5px;line-height:15px;letter-spacing:-0.349px;color:#000;font-weight:400;">17.10.2014 20:30</span>
<span class="t" style="left:504.1px;top:193.5px;font-size:11.5px;line-height:15px;letter-spacing:-0.355px;color:#000;font-weight:400;">17.10.2014 22:00</span>
<span class="t" style="left:638.7px;top:193.5px;font-size:11.5px;line-height:15px;letter-spacing:0.093px;color:#000;font-weight:400;">Disabled</span>
<span class="t" style="left:857.0px;top:603.5px;font-size:11.5px;line-height:15px;letter-spacing:0.050px;color:#000;font-weight:400;">The message group </span>
<span class="t" style="left:961.9px;top:603.5px;font-size:11.5px;line-height:15px;letter-spacing:0.344px;color:#2f8cff;font-weight:400;text-decoration:underline;">Default</span>
<span class="t" style="left:1002.4px;top:603.5px;font-size:11.5px;line-height:15px;letter-spacing:0.237px;color:#000;font-weight:400;">contains</span>
<span class="t" style="left:857.0px;top:618.5px;font-size:11.5px;line-height:15px;letter-spacing:0.068px;color:#000;font-weight:400;">unpublished changes.</span>
<span class="t" style="left:857.0px;top:642.5px;font-size:11.5px;line-height:15px;letter-spacing:0.119px;color:#000;font-weight:400;">The mobile message group </span>
<span class="t" style="left:1000.9px;top:642.5px;font-size:11.5px;line-height:15px;letter-spacing:0.228px;color:#2f8cff;font-weight:400;text-decoration:underline;">Mobile Clients</span>
<span class="t" style="left:857.0px;top:658.5px;font-size:11.5px;line-height:15px;letter-spacing:0.070px;color:#000;font-weight:400;">contains unpublished changes.</span>
</body></html>
